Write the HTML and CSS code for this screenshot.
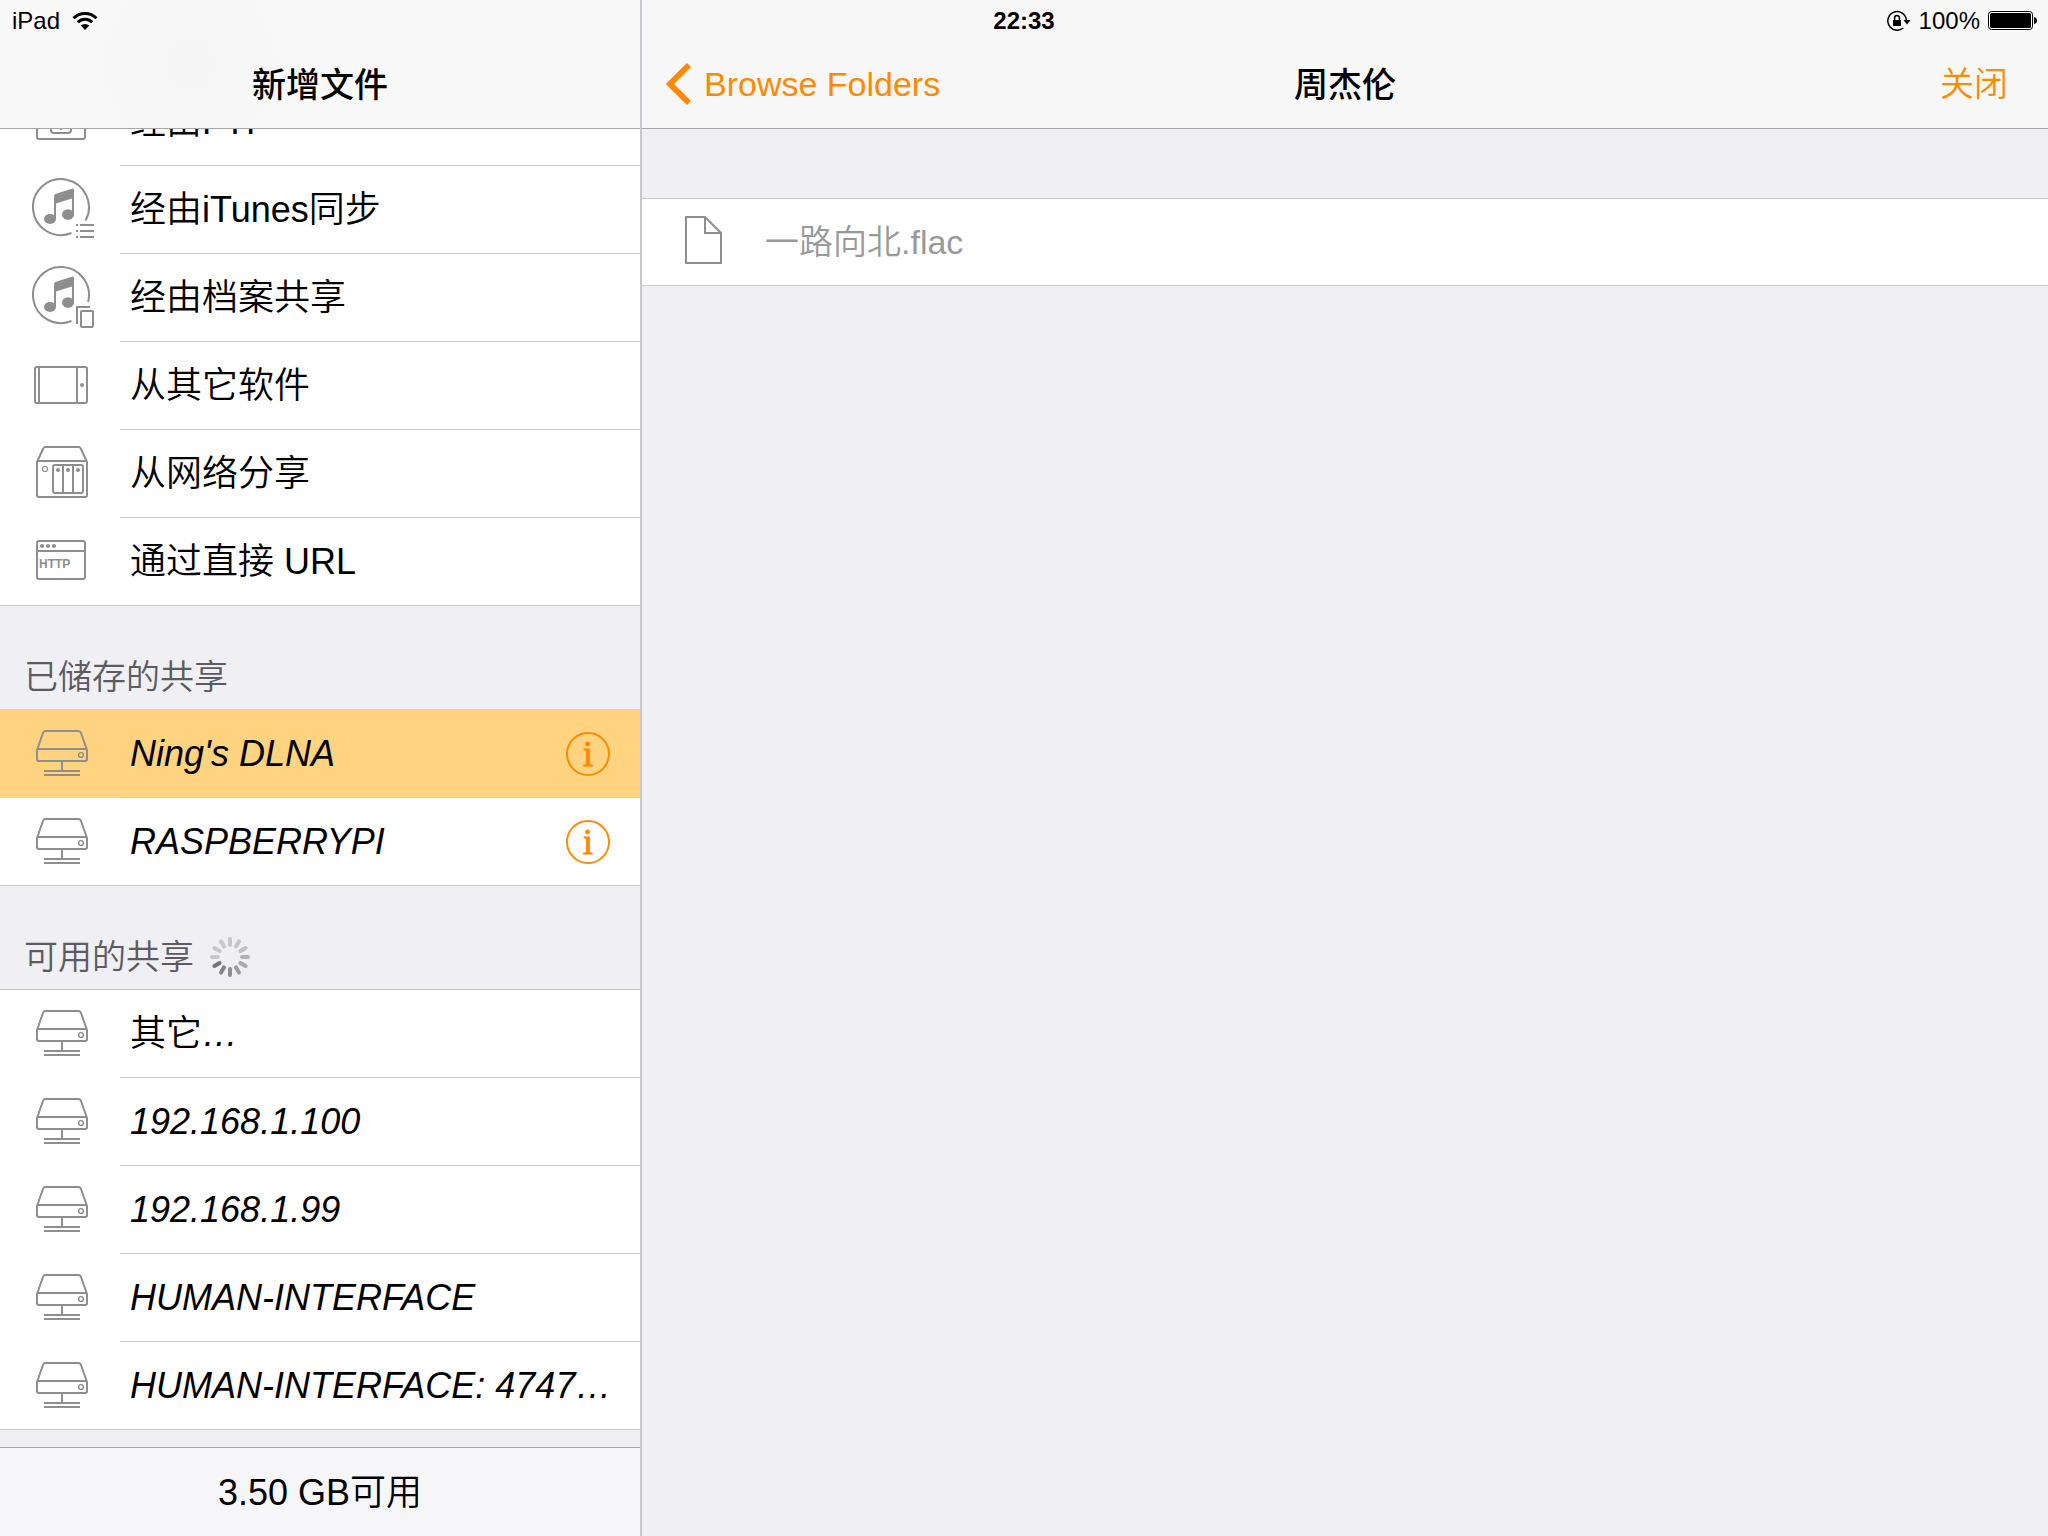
FILE: index.html
```html
<!DOCTYPE html>
<html lang="zh-CN">
<head>
<meta charset="utf-8">
<meta name="viewport" content="width=device-width, initial-scale=1">
<title>新增文件</title>
<link rel="stylesheet" href="styles.css">
</head>
<body>
<svg class="sprite" aria-hidden="true">
  <symbol id="drive" viewBox="0 0 64 64">
    <g fill="none" stroke="currentColor" stroke-width="2">
      <path d="M5 28 11 11Q12 9 13 9H47Q48 9 49 11L55 28V37Q55 39 53 39H7Q5 39 5 37Z" stroke-linejoin="round"/>
      <path d="M5 27H55M30 39V48M12 49H48M12 53H48"/>
      <circle cx="49" cy="33" r="2.4" stroke-width="1.4"/>
    </g>
  </symbol>
  <symbol id="note" viewBox="0 0 64 64">
    <path fill="currentColor" fill-rule="evenodd" d="M22 18.5Q22 16.5 24 15.8L40 10.7Q42 10.2 42 12V37H40V20.5L24 25.5V41H22Z"/>
    <ellipse cx="18" cy="41" rx="6" ry="5" fill="currentColor"/>
    <ellipse cx="36" cy="36.5" rx="6" ry="5.2" fill="currentColor"/>
  </symbol>
</svg>

<header class="status">
  <div class="status-left">
    <span>iPad</span>
    <svg width="26" height="20" viewBox="0 0 26 20" aria-label="Wi-Fi">
      <g fill="none" stroke="#000" stroke-width="3">
        <path d="M1.5 7.2A16.4 16.4 0 0 1 24.5 7.2"/>
        <path d="M5.8 11.3A10.3 10.3 0 0 1 20.2 11.3"/>
      </g>
      <path d="M13 19 8.8 14.6A6 6 0 0 1 17.2 14.6Z"/>
    </svg>
  </div>
  <time class="clock">22:33</time>
  <div class="status-right">
    <svg width="24" height="22" viewBox="0 0 24 22" aria-label="Rotation lock">
      <path d="M19.4 10A9.3 9.3 0 1 0 16.2 18" fill="none" stroke="#000" stroke-width="1.5"/>
      <path d="M16.5 10H23.5L20 14.5Z"/>
      <rect x="6" y="10" width="8" height="6" rx="0.5"/>
      <path d="M7.6 10.5V7.8A2.4 2.4 0 0 1 12.4 7.8V10.5" fill="none" stroke="#000" stroke-width="1.5"/>
    </svg>
    <span>100%</span>
    <svg width="50" height="20" viewBox="0 0 50 20" aria-label="Battery">
      <rect x="0.5" y="0.5" width="44" height="18" rx="3" fill="#fff" stroke="#000"/>
      <rect x="2" y="2" width="41" height="15" rx="1.5"/>
      <path d="M46 6Q49 6.500 49 9.500T46 13Z"/>
    </svg>
  </div>
</header>

<div class="split">
  <aside class="sidebar">
    <header class="navbar navbar-left"><h1>新增文件</h1></header>
    <div class="scroller">
      <ul class="list scrolled">
        <li class="row">
          <svg class="icon" viewBox="0 0 64 64"><g fill="none" stroke="currentColor" stroke-width="2"><rect x="5" y="15" width="48" height="34" rx="2"/><rect x="19" y="23" width="20" height="20" rx="3"/><path d="M29 27V38M25 35 29 39 33 35"/></g></svg>
          <div class="cell"><a href="#ftp">经由FTP</a></div>
        </li>
        <li class="row">
          <svg class="icon" viewBox="0 0 64 64"><use href="#note"/><g fill="none" stroke="currentColor" stroke-width="2"><path d="M53.500 42.500A28 28 0 1 0 39.500 55"/><path d="M44 47H46M48 47H62M44 53H46M48 53H62M44 59H46M48 59H62"/></g></svg>
          <div class="cell"><a href="#itunes">经由iTunes同步</a></div>
        </li>
        <li class="row">
          <svg class="icon" viewBox="0 0 64 64"><use href="#note"/><g fill="none" stroke="currentColor" stroke-width="2"><path d="M56.100 36A28 28 0 1 0 39.500 55"/><path d="M45 58V41H58"/><rect x="49" y="45" width="12" height="16" rx="1"/></g></svg>
          <div class="cell"><a href="#sharing">经由档案共享</a></div>
        </li>
        <li class="row">
          <svg class="icon" viewBox="0 0 64 64"><g fill="none" stroke="currentColor" stroke-width="2"><rect x="3" y="13" width="52" height="36" rx="2"/><path d="M7 13V49M45 13V49"/></g><circle cx="50" cy="31" r="2" fill="currentColor"/></svg>
          <div class="cell"><a href="#apps">从其它软件</a></div>
        </li>
        <li class="row">
          <svg class="icon" viewBox="0 0 64 64"><g fill="none" stroke="currentColor" stroke-width="2"><path d="M5 20 11 7Q12 5 13 5H47Q48 5 49 7L55 20V53Q55 55 53 55H7Q5 55 5 53ZM5 19H55" stroke-linejoin="round"/><rect x="21" y="23" width="30" height="28" rx="2"/><path d="M31 23V51M41 23V51"/><circle cx="13" cy="27" r="2.500" stroke-width="1.200"/></g><g fill="currentColor"><circle cx="26" cy="28" r="2"/><circle cx="36" cy="28" r="2"/><circle cx="46" cy="28" r="2"/></g></svg>
          <div class="cell"><a href="#network">从网络分享</a></div>
        </li>
        <li class="row">
          <svg class="icon" viewBox="0 0 64 64"><g fill="none" stroke="currentColor" stroke-width="2"><rect x="5" y="11" width="48" height="38" rx="2"/><path d="M5 21H53"/></g><g fill="currentColor"><circle cx="10" cy="16" r="2"/><circle cx="16" cy="16" r="2"/><circle cx="22" cy="16" r="2"/><text class="http" x="7" y="38">HTTP</text></g></svg>
          <div class="cell"><a href="#url">通过直接 URL</a></div>
        </li>
      </ul>

      <h2 class="section section-selected">已储存的共享</h2>
      <ul class="list">
        <li class="row selected">
          <svg class="icon"><use href="#drive"/></svg>
          <div class="cell"><a class="share" href="#dlna">Ning's DLNA</a><button class="info" type="button" aria-label="Ning's DLNA info">i</button></div>
        </li>
        <li class="row">
          <svg class="icon"><use href="#drive"/></svg>
          <div class="cell"><a class="share" href="#pi">RASPBERRYPI</a><button class="info" type="button" aria-label="RASPBERRYPI info">i</button></div>
        </li>
      </ul>

      <h2 class="section">可用的共享
        <svg class="spinner" viewBox="-20 -20 40 40" aria-label="Loading">
          <g stroke-width="4" stroke-linecap="round">
            <path stroke="#c7c7ca" d="M0-12V-18"/>
            <path stroke="#c5c5c8" d="M0-12V-18" transform="rotate(30)"/>
            <path stroke="#bfbfc2" d="M0-12V-18" transform="rotate(60)"/>
            <path stroke="#b4b4b7" d="M0-12V-18" transform="rotate(90)"/>
            <path stroke="#a8a8ab" d="M0-12V-18" transform="rotate(120)"/>
            <path stroke="#9c9c9f" d="M0-12V-18" transform="rotate(150)"/>
            <path stroke="#8e8e90" d="M0-12V-18" transform="rotate(180)"/>
            <path stroke="#828284" d="M0-12V-18" transform="rotate(210)"/>
            <path stroke="#757577" d="M0-12V-18" transform="rotate(240)"/>
            <path stroke="#c7c7ca" d="M0-12V-18" transform="rotate(270)"/>
            <path stroke="#c7c7ca" d="M0-12V-18" transform="rotate(300)"/>
            <path stroke="#c7c7ca" d="M0-12V-18" transform="rotate(330)"/>
          </g>
        </svg>
      </h2>
      <ul class="list">
        <li class="row"><svg class="icon"><use href="#drive"/></svg><div class="cell"><a href="#other">其它<i>…</i></a></div></li>
        <li class="row"><svg class="icon"><use href="#drive"/></svg><div class="cell"><a class="share" href="#h100">192.168.1.100</a></div></li>
        <li class="row"><svg class="icon"><use href="#drive"/></svg><div class="cell"><a class="share" href="#h99">192.168.1.99</a></div></li>
        <li class="row"><svg class="icon"><use href="#drive"/></svg><div class="cell"><a class="share" href="#hi">HUMAN-INTERFACE</a></div></li>
        <li class="row"><svg class="icon"><use href="#drive"/></svg><div class="cell"><a class="share" href="#hi2">HUMAN-INTERFACE: 4747…</a></div></li>
      </ul>
    </div>
    <footer class="toolbar">3.50 GB可用</footer>
  </aside>

  <main class="detail">
    <header class="navbar">
      <button class="nav-button back" type="button">
        <svg width="26" height="44" viewBox="0 0 26 44" aria-hidden="true"><path d="M23 3 4 22 23 41" fill="none" stroke="currentColor" stroke-width="6"/></svg>
        Browse Folders
      </button>
      <h1>周杰伦</h1>
      <button class="nav-button close" type="button">关闭</button>
    </header>
    <ul class="list files">
      <li class="row file">
        <svg class="icon" viewBox="0 0 64 64"><path d="M12 7H31L47 23V53H12ZM31 7V23H47" fill="none" stroke="currentColor" stroke-width="2"/></svg>
        <span>一路向北.flac</span>
      </li>
    </ul>
  </main>
</div>
</body>
</html>
```
FILE: styles.css
```css
* { box-sizing: border-box; }

body {
  margin: 0;
  height: 100vh;
  overflow: hidden;
  background: #efeff4;
  color: #000;
  font-family: "Liberation Sans", "Noto Sans CJK SC", sans-serif;
  font-size: 34px;
  font-weight: 350;
}

h1, h2, ul { margin: 0; padding: 0; }
ul { list-style: none; }
a { color: inherit; text-decoration: none; }
button { border: 0; padding: 0; background: none; font: inherit; }
.sprite { position: absolute; width: 0; height: 0; }

/* System bar drawn over both panes */
.status {
  position: absolute;
  inset: 0 0 auto 0;
  z-index: 1;
  display: grid;
  grid-template-columns: 1fr auto 1fr;
  align-items: center;
  padding: 0 10px;
  font-size: 24px;
  line-height: 42px;
}
.status-left, .status-right { display: flex; align-items: center; }
.status-left { gap: 12px; padding-left: 2px; }
.status-right { justify-content: flex-end; gap: 8px; }
.clock { font-weight: 700; }

.split { display: flex; height: 100%; }

.sidebar {
  display: flex;
  flex-direction: column;
  flex: none;
  width: 642px;
  border-right: 2px solid #c8c7cc;
}
.detail { flex: 1; min-width: 0; }

.navbar {
  display: grid;
  grid-template-columns: minmax(0, 1fr) auto minmax(0, 1fr);
  align-items: center;
  flex: none;
  height: 129px;
  padding: 40px 24px 0;
  border-bottom: 1px solid #a7a7ab;
  background: #f7f7f7;
}
.navbar h1 {
  grid-column: 2;
  padding-top: 2px;
  font-size: 34px;
  font-weight: 500;
  line-height: 48px;
}
.navbar-left {
  background: radial-gradient(circle at 190px 64px, #f5f5f5, #f9f9f9 140px);
}
.nav-button { color: #ff8a00; line-height: 48px; white-space: nowrap; }
.back { display: flex; align-items: center; gap: 12px; justify-self: start; }
.close { justify-self: end; margin-right: 16px; }

.scroller { flex: 1; min-height: 0; overflow: hidden; }
.scrolled { margin-top: -51px; }

.list { background: #fff; }
.row { display: flex; align-items: center; height: 88px; line-height: 44px; }
.icon { flex: none; width: 64px; height: 64px; margin: 0 24px 0 32px; color: #8e8e8e; }
.cell {
  display: flex;
  align-items: center;
  justify-content: space-between;
  flex: 1;
  height: 100%;
  padding: 0 30px 0 10px;
  border-bottom: 1px solid #c8c7cc;
  font-size: 36px;
  white-space: nowrap;
}
.row:last-child { border-bottom: 1px solid #c8c7cc; }
.row:last-child .cell { border-bottom: 0; }
.share { font-style: italic; }
.selected { background: #ffd37f; }
.http { font: 700 12px "Liberation Sans", sans-serif; }

.info {
  width: 44px;
  height: 44px;
  border: 2px solid #ff8a00;
  border-radius: 50%;
  color: #ff8a00;
  font: 400 36px/38px "Liberation Serif", serif;
  text-align: center;
  -webkit-text-stroke: 1px #ff8a00;
}

.section {
  display: flex;
  align-items: flex-end;
  gap: 16px;
  height: 104px;
  padding: 0 24px 12px;
  border-bottom: 1px solid #c8c7cc;
  color: #5c5c60;
  font-size: 34px;
  font-weight: 350;
  line-height: 40px;
}
.section-selected { border-color: #ffd37f; }
.spinner { width: 40px; height: 40px; }

.toolbar {
  flex: none;
  height: 89px;
  border-top: 1px solid #a7a7ab;
  background: #f6f6f8;
  font-size: 36px;
  line-height: 90px;
  text-align: center;
}

.files { margin-top: 69px; border-top: 1px solid #c8c7cc; }
.file { height: 87px; color: #999; }
.file .icon { margin-right: 27px; }
```
